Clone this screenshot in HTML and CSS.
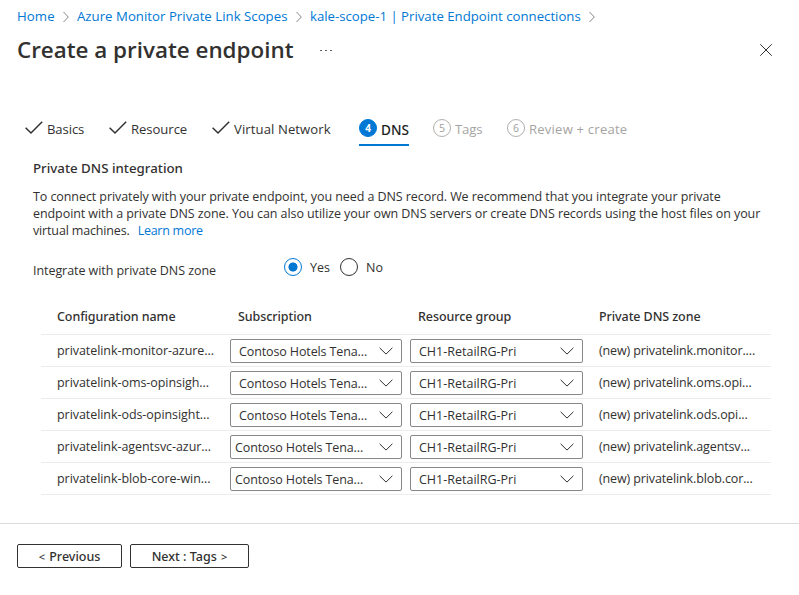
FILE: index.html
```html
<!DOCTYPE html>
<html lang="en">
<head>
<meta charset="utf-8">
<title>Create a private endpoint</title>
<link rel="stylesheet" href="styles.css">
</head>
<body>
<svg class="defs" width="0" height="0" aria-hidden="true">
  <symbol id="sep" viewBox="0 0 6 12"><path d="M.5 1 5.3 6 .5 11"/></symbol>
  <symbol id="check" viewBox="0 0 18 13"><path d="M.6 6.7 6 12 17.2.8"/></symbol>
  <symbol id="down" viewBox="0 0 14 8"><path d="M.6.8 7 7.1 13.4.8"/></symbol>
  <symbol id="close" viewBox="0 0 12 12"><path d="M.3.3 11.7 11.7M11.7.3.3 11.7"/></symbol>
</svg>

<nav class="breadcrumb">
  <a class="home">Home</a><svg class="sep"><use href="#sep"/></svg>
  <a>Azure Monitor Private Link Scopes</a><svg class="sep"><use href="#sep"/></svg>
  <a class="scope">kale-scope-1 | Private Endpoint connections</a><svg class="sep"><use href="#sep"/></svg>
</nav>

<header class="heading">
  <h1>Create a private endpoint</h1>
  <span class="more"><i></i><i></i><i></i></span>
  <svg class="close"><use href="#close"/></svg>
</header>

<div class="tabs">
  <div class="tab basics"><svg class="check"><use href="#check"/></svg><span>Basics</span></div>
  <div class="tab resource"><svg class="check"><use href="#check"/></svg><span>Resource</span></div>
  <div class="tab network"><svg class="check"><use href="#check"/></svg><span>Virtual Network</span></div>
  <div class="tab active"><b class="num">4</b><span>DNS</span></div>
  <div class="tab pending tags"><b class="num">5</b><span>Tags</span></div>
  <div class="tab pending review"><b class="num">6</b><span>Review + create</span></div>
</div>

<main class="content">
  <h2>Private DNS integration</h2>
  <p>To connect privately with your private endpoint, you need a DNS record. We recommend that you integrate your private<br>endpoint with a private DNS zone. You can also utilize your own DNS servers or create DNS records using the host files on your<br><span class="last">virtual machines.</span><a class="learn">Learn more</a></p>
  <div class="field">
    <span class="label">Integrate with private DNS zone</span>
    <span class="radio on"></span><span class="yes">Yes</span>
    <span class="radio"></span><span>No</span>
  </div>

  <div class="table">
    <div class="row head"><span class="name">Configuration name</span><span class="hsub">Subscription</span><span class="hgroup">Resource group</span><span class="zone">Private DNS zone</span></div>
    <div class="row"><span class="name">privatelink-monitor-azure...</span><div class="select"><span>Contoso Hotels Tena...</span><svg class="down"><use href="#down"/></svg></div><div class="select group"><span>CH1-RetailRG-Pri</span><svg class="down"><use href="#down"/></svg></div><span class="zone">(new) privatelink.monitor....</span></div>
    <div class="row"><span class="name">privatelink-oms-opinsigh...</span><div class="select"><span>Contoso Hotels Tena...</span><svg class="down"><use href="#down"/></svg></div><div class="select group"><span>CH1-RetailRG-Pri</span><svg class="down"><use href="#down"/></svg></div><span class="zone">(new) privatelink.oms.opi...</span></div>
    <div class="row"><span class="name">privatelink-ods-opinsight...</span><div class="select"><span>Contoso Hotels Tena...</span><svg class="down"><use href="#down"/></svg></div><div class="select group"><span>CH1-RetailRG-Pri</span><svg class="down"><use href="#down"/></svg></div><span class="zone">(new) privatelink.ods.opi...</span></div>
    <div class="row"><span class="name">privatelink-agentsvc-azur...</span><div class="select tight"><span>Contoso Hotels Tena...</span><svg class="down"><use href="#down"/></svg></div><div class="select group"><span>CH1-RetailRG-Pri</span><svg class="down"><use href="#down"/></svg></div><span class="zone">(new) privatelink.agentsv...</span></div>
    <div class="row"><span class="name">privatelink-blob-core-win...</span><div class="select tight"><span>Contoso Hotels Tena...</span><svg class="down"><use href="#down"/></svg></div><div class="select group"><span>CH1-RetailRG-Pri</span><svg class="down"><use href="#down"/></svg></div><span class="zone">(new) privatelink.blob.cor...</span></div>
  </div>
</main>

<footer class="footer">
  <button class="prev"><span class="lt">&lt;</span> Previous</button>
  <button class="next">Next : Tags <span class="lt">&gt;</span></button>
</footer>
</body>
</html>
```
FILE: styles.css
```css
* { box-sizing: border-box; }
body {
  margin: 0;
  height: 595px;
  overflow: hidden;
  background: #fff;
  color: #323130;
  font: 12.5px/17px "Open Sans", "Noto Sans", sans-serif;
  white-space: nowrap;
}
svg { display: block; flex: none; overflow: visible; }
symbol { overflow: visible; }
svg path { fill: none; stroke: currentColor; }
.defs { position: absolute; }
a { color: #0078d4; }

.breadcrumb {
  display: flex;
  align-items: center;
  height: 32px;
  padding-left: 17px;
  font-size: 13.2px;
}
.breadcrumb a { width: 211px; letter-spacing: .03px; }
.breadcrumb .home { width: 38px; letter-spacing: .1px; }
.breadcrumb .scope { width: 271px; letter-spacing: 0; }
.sep { width: 6px; height: 12px; margin: 1px 8px 0; color: #8a8886; }

.heading { display: flex; align-items: center; height: 36px; padding: 0 27px 0 17px; }
h1 { margin: 0; width: 277px; font-size: 22.4px; line-height: 32px; font-weight: 600; }
.more { display: flex; gap: 3px; margin-left: 26px; }
.more i { width: 2px; height: 1px; background: #605e5c; }
.close { width: 12px; height: 12px; margin-left: auto; }

.tabs { display: flex; height: 35px; margin-top: 43px; padding-left: 25px; font-size: 13.1px; }
.tab { display: flex; height: 35px; padding-top: 10px; border-bottom: 2px solid transparent; }
.check { width: 18px; height: 13px; margin: 0 4px 0 0; stroke-width: 1.5; }
.basics { width: 84px; letter-spacing: -.1px; }
.resource { width: 103px; letter-spacing: -.05px; }
.network { width: 147px; letter-spacing: .1px; }
.num {
  width: 18px;
  height: 18px;
  margin: -2px 4px 0 0;
  border: 1px solid #b3b0ad;
  border-radius: 50%;
  color: #a19f9d;
  font-size: 10.5px;
  line-height: 16px;
  text-align: center;
}
.active { width: 50px; font: 500 13.6px/17px "Noto Sans", "Open Sans", sans-serif; color: #201f1e; border-color: #0078d4; }
.active .num { background: #0078d4; border-color: #0078d4; color: #fff; font-weight: 700; font-size: 10px; line-height: 16px; }
.pending { color: #a6a4a2; }
.tags { margin-left: 24px; width: 74px; letter-spacing: -.1px; }
.review { letter-spacing: .2px; }
.pending .num { letter-spacing: 0; font-weight: 400; }

.content { padding: 13px 28px 0 33px; }
h2 { margin: 0; font: 500 13.3px/18px "Noto Sans", "Open Sans", sans-serif; }
p { margin: 11px 0 0; letter-spacing: -.075px; }
.last { letter-spacing: -.15px; }
.learn { margin-left: 8px; letter-spacing: -.27px; }
.field { display: flex; height: 24px; margin-top: 16px; align-items: center; }
.label { width: 251px; padding-top: 6px; letter-spacing: -.06px; }
.radio {
  width: 18px;
  height: 18px;
  margin-right: 8px;
  border: 1px solid #323130;
  border-radius: 50%;
}
.radio.on { border-color: #0078d4; background: radial-gradient(circle, #0078d4 4.2px, transparent 4.9px); }
.yes { width: 30px; }

.table { margin: 20px 0 0 8px; width: 730px; letter-spacing: -.06px; }
.row {
  display: grid;
  grid-template-columns: 189px 180px 173px 1fr;
  height: 32px;
  border-bottom: 1px solid #edebe9;
  line-height: 31px;
}
.head { height: 36px; font: 500 12.5px/36px "Noto Sans", "Open Sans", sans-serif; letter-spacing: -.08px; }
.name { padding-left: 16px; }
.hsub { padding-left: 8px; }
.hgroup { padding-left: 8px; }
.zone { padding-left: 16px; }
.row:not(.head) .zone { letter-spacing: -.12px; }
.select {
  display: flex;
  justify-content: space-between;
  width: 172px;
  height: 24px;
  margin-top: 4px;
  padding: 0 8px;
  border: 1px solid #8a8886;
  border-radius: 2px;
  line-height: 24px;
  letter-spacing: -.12px;
}
.select.tight { padding-left: 4px; }
.select.group { width: 173px; letter-spacing: 0; }
.down { width: 14px; height: 8px; margin-top: 7px; }

.footer {
  display: flex;
  gap: 8px;
  margin-top: 28px;
  padding: 20px 17px;
  border-top: 1px solid #dcdbda;
}
button {
  height: 24px;
  padding: 0;
  border: 1px solid #323130;
  border-radius: 2px;
  background: #fff;
  color: #323130;
  font: 500 12.5px/21px "Noto Sans", "Open Sans", sans-serif;
}
.lt { font-size: 11px; }
.prev { width: 105px; }
.prev .lt { margin-right: 1px; }
.next { width: 119px; }
.next .lt { margin-left: 1px; }
```
